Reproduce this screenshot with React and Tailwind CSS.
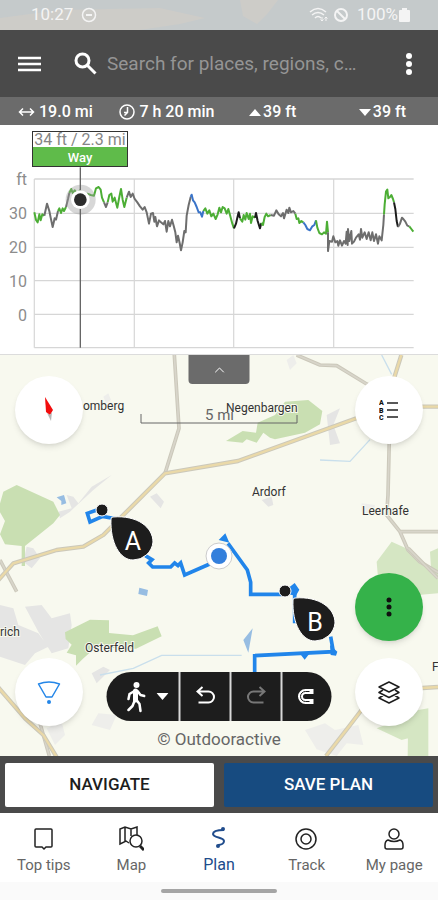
import { ChevronUp } from 'lucide-react';
import React, { useState } from 'react';

const GREEN = '#4cae35';
const GRAY = '#6e6e6e';
const BLUE = '#3a74c9';
const BLACK = '#1c1c1c';

const segments = [
    { color: GREEN, points: '103,262 108,285 113,292 118,268 122,286 127,268 133,272' },
    { color: GRAY, points: '133,272 141,236 148,258 152,278 158,306 164,280 168,284 174,258' },
    { color: GREEN, points: '174,258 178,250 183,264 188,250 192,258 198,246' },
    { color: GRAY, points: '198,246 204,222 208,204' },
    { color: GREEN, points: '208,204 214,192 218,204 224,196 232,206 240,196 250,214 262,206 272,210 282,212 288,190 296,186 302,194 306,218 312,232' },
    { color: GRAY, points: '312,232 318,246 323,232' },
    { color: GREEN, points: '323,232 328,210 334,206 338,230 344,218 352,248 358,216 363,192 368,224 373,246 380,218' },
    { color: GRAY, points: '380,218 387,200 392,216 398,206 404,222 412,232 420,244 428,254 434,246 440,262 447,296 453,266 459,264 463,290 466,276 471,304 477,286 483,292 490,298 495,288 500,320 505,288 510,304 516,284 521,302 526,322 530,352 534,332 539,354 543,376 548,352 553,318 557,322 560,272 566,240 572,216' },
    { color: BLUE, points: '572,216 575,209 579,226 584,232 590,246 596,262 601,262 606,275 610,258' },
    { color: GREEN, points: '610,258 616,250 622,266 628,256 634,274 640,266 647,282 653,268 658,248 663,262 668,246 674,250 680,266 685,252 691,274 697,296 702,310' },
    { color: BLACK, points: '702,310 708,296 712,278 716,262 720,280' },
    { color: GREEN, points: '720,280 727,290 731,270 736,284 740,264 746,282 750,266 753,294 758,274 765,278' },
    { color: BLACK, points: '765,278 768,264 773,288 780,310 784,294' },
    { color: GREEN, points: '784,294 789,300 794,276 799,266 804,274 812,270' },
    { color: GRAY, points: '812,270 822,272 829,256 836,268 843,274 849,264 852,280 860,254 865,264 868,248 873,262 880,258 886,266' },
    { color: GREEN, points: '886,266 890,282 895,280 898,294 904,288 910,292' },
    { color: BLUE, points: '910,292 916,300 922,312 930,316 937,304 943,300 948,286' },
    { color: GREEN, points: '948,286 952,308 958,324 966,328 972,322 978,326 981,290 984,322' },
    { color: GRAY, points: '984,322 984,378 988,348 996,350 1000,334 1006,352 1012,348 1015,362 1020,346 1026,362 1032,348 1037,356 1040,320 1043,360 1044,312 1048,348 1054,318 1056,356 1062,350 1068,338 1076,328 1080,344 1083,312 1087,338 1094,322 1100,342 1106,322 1112,346 1117,322 1122,348 1128,328 1134,356 1138,334 1145,346 1150,300 1152,268' },
    { color: GREEN, points: '1152,268 1154,238 1158,200 1162,194 1165,220 1170,216 1174,210 1179,222 1182,232' },
    { color: BLACK, points: '1182,232 1186,252 1190,288 1194,306' },
    { color: GRAY, points: '1194,306 1200,296 1206,278 1210,282 1216,290 1222,302 1228,304' },
    { color: GREEN, points: '1228,304 1234,312 1240,320' },
];

const axisLabels = [
    { text: 'ft', y: 60 },
    { text: '30', y: 94 },
    { text: '20', y: 128 },
    { text: '10', y: 162 },
    { text: '0', y: 196 },
];

const places = [
    { name: 'omberg', x: 83, y: 55 },
    { name: 'Negenbargen', x: 226, y: 57 },
    { name: 'Ardorf', x: 252, y: 141 },
    { name: 'Leerhafe', x: 362, y: 160 },
    { name: 'Osterfeld', x: 85, y: 297 },
    { name: 'rich', x: 0, y: 281 },
    { name: 'F', x: 432, y: 316 },
];

const StatusBar = () => (
    <div className="relative flex h-[30px] items-center justify-between overflow-hidden bg-[#c5cacb] pr-7 pl-[31px] text-[17px] text-[#f4f4f4]">
        <svg className="absolute inset-0 h-full w-full" viewBox="0 0 438 30" preserveAspectRatio="none" aria-hidden="true">
            <path d="M0 18 60 10l100-2 45 10-25 6-40 6H0zM240 0h38l-10 13-11 11-14-8z" fill="#cdccc8" />
        </svg>
        <div className="relative flex items-center gap-2">
            <span>10:27</span>
            <svg width="16" height="16" viewBox="0 0 16 16" fill="none" stroke="currentColor" strokeWidth="1.5">
                <circle cx="8" cy="8" r="6.5" />
                <path d="M5 8h6" strokeWidth="2" />
            </svg>
        </div>
        <div className="relative flex items-center gap-1">
            <svg width="20" height="16" viewBox="0 0 20 16" fill="none" stroke="currentColor" strokeWidth="1.5">
                <path d="M1 5q8-7 16 0M3 8q6-5 12 0M6 11q3-3 6 0" />
                <path d="m13 10 0 4m-1.500-1.500 1.500 1.500 1.500-1.500M17 14v-4m-1.500 1.500L17 10l1.500 1.500" strokeWidth="1" />
            </svg>
            <svg width="16" height="16" viewBox="0 0 16 16" fill="none" stroke="currentColor" strokeWidth="2">
                <circle cx="8" cy="8" r="6" />
                <path d="m4 4 8 8" />
            </svg>
            <div className="flex items-center gap-px">
                <span className="pl-1">100%</span>
                <svg width="11" height="16" viewBox="0 0 11 16" fill="currentColor">
                    <path d="M3 1h5v2h2q1 0 1 1v10q0 1-1 1H1q-1 0-1-1V4q0-1 1-1h2z" />
                </svg>
            </div>
        </div>
    </div>
);

const SearchBar = () => (
    <header className="flex h-[67px] items-center bg-[#4a4a4a] px-[18px] text-white">
        <button aria-label="Menu">
            <svg width="24" height="18" viewBox="0 0 24 18" stroke="currentColor" strokeWidth="2.500">
                <path d="M0 3h23M0 9h23M0 15h23" />
            </svg>
        </button>
        <label htmlFor="search" className="ml-8">
            <svg width="23" height="23" viewBox="0 0 23 23" fill="none" stroke="currentColor" strokeWidth="3">
                <circle cx="8.500" cy="8.500" r="6.500" />
                <path d="m13 13 8.500 8.500" />
            </svg>
        </label>
        <input
            id="search"
            type="text"
            aria-label="Search"
            placeholder="Search for places, regions, c…"
            className="ml-[10px] min-w-0 flex-1 bg-transparent pt-0.5 text-[19px] text-white outline-none placeholder:text-[#959595]"
        />
        <button aria-label="More options" className="ml-2">
            <svg width="22" height="22" viewBox="0 0 22 22" fill="currentColor">
                <circle cx="11" cy="3" r="3" />
                <circle cx="11" cy="11" r="3" />
                <circle cx="11" cy="19" r="3" />
            </svg>
        </button>
    </header>
);

const RouteStats = () => (
    <div className="flex h-7 items-center justify-between bg-[#6b6b6b] pt-0.5 pr-8 pl-[18px] text-base font-medium text-white">
        <div className="flex items-center gap-1">
            <svg width="17" height="10" viewBox="0 0 17 10" fill="none" stroke="currentColor" strokeWidth="1.500">
                <path d="M1 5h14M5 1.500 1.500 5 5 8.500M12 1.500 15.500 5 12 8.500" />
            </svg>
            <span>19.0 mi</span>
        </div>
        <div className="flex items-center gap-1">
            <svg width="16" height="16" viewBox="0 0 16 16" fill="none" stroke="currentColor" strokeWidth="1.500">
                <circle cx="8" cy="8" r="7" />
                <path d="M8.500 3v5.500l-3 3M8.500 8.500H5" />
            </svg>
            <span>7 h 20 min</span>
        </div>
        <div className="flex items-center gap-0.5 pl-2">
            <svg width="12" height="7" viewBox="0 0 12 7" fill="currentColor">
                <path d="M6 0 12 7H0z" />
            </svg>
            <span>39 ft</span>
        </div>
        <div className="flex items-center gap-0.5 pl-9">
            <svg width="12" height="7" viewBox="0 0 12 7" fill="currentColor">
                <path d="M0 0h12L6 7z" />
            </svg>
            <span>39 ft</span>
        </div>
    </div>
);

const ElevationProfile = () => (
    <section className="border-b border-[#dcdcdc] bg-white" aria-label="Elevation profile">
        <svg className="block w-full" viewBox="0 0 438 229">
            <g transform="scale(0.33333)" fill="none">
                <path d="M103 162v506M403 162v506M701 162v506M1001 162v506" stroke="#dadada" strokeWidth="4" />
                <path d="M103 162h1138M103 265h1138M103 367h1138M103 467h1138M103 568h1138M103 668h1138" stroke="#d6d6d6" strokeWidth="4" />
                {segments.map((segment) => (
                    <polyline
                        key={segment.points}
                        points={segment.points}
                        stroke={segment.color}
                        strokeWidth="6"
                        strokeLinejoin="round"
                    />
                ))}
                <circle cx="242" cy="224" r="45" fill="#9a9a9a" fillOpacity="0.4" />
                <path d="M241 127v541" stroke="#666" strokeWidth="4" />
                <circle cx="241" cy="224" r="28" fill="#fff" />
                <circle cx="241" cy="224" r="19" fill="#2b2b2b" />
            </g>
            <g fill="#8c8c8c" fontSize="16" textAnchor="end">
                {axisLabels.map((label) => (
                    <text key={label.text} x="27" y={label.y}>{label.text}</text>
                ))}
            </g>
            <rect x="32" y="6" width="96" height="36" fill="#333" />
            <rect x="33" y="7" width="94" height="15" fill="#fff" />
            <rect x="33" y="22" width="94" height="19" fill="#5fbb4a" />
            <text x="80" y="20" fontSize="16" fill="#858585" textAnchor="middle">34 ft / 2.3 mi</text>
            <text x="80" y="37" fontSize="13" fontWeight="500" fill="#fff" textAnchor="middle">Way</text>
        </svg>
    </section>
);

const Road = ({ d, main }) => (
    <g fill="none" strokeLinejoin="round">
        <path d={d} stroke="#cbc8ba" strokeWidth={main ? 13 : 11} />
        <path d={d} stroke={main ? '#ead9a8' : '#d8d5ca'} strokeWidth={main ? 7 : 5} />
    </g>
);

const MapCanvas = () => (
    <svg className="absolute inset-0 h-full w-full" viewBox="0 0 438 401" preserveAspectRatio="xMidYMid slice" role="img" aria-label="Route map">
        <rect width="438" height="401" fill="#f8f9ef" />
        <g transform="scale(0.33333)">
            {/* Settlements */}
            <g fill="#e5e5e4">
                <path d="m175 470 40-10-15-40 20 5 15 20 40-50 60-35-55 45-70 65-30 20zM450 425l20-10 22 25-10 20zM80 575l20 5 20 30-25 30-25-20zM0 750l40 10 15 50 60 25 30 40-40 20-30 35-90-30zM75 755l50-5 30 40 55-15 5 35-10 70-50 15-40-65zM275 955l35-20 20 10-40 40zM980 180l40-20-20 50 20 55-30 5zM785 435l30-10 5 25-15 5z" />
                <path d="m275 1110 20-35 55 5-20 45zM860 15l20-15 10 25-20 20zM915 1125l60-20 30 20 70-15 15 60-50-5-30 38-60-20zM310 125l15-10 8 20-15 10zM140 1120l45-20 10 40-30 30zM1085 445l40 5-5 30-35-10z" fill="#eeeeeb" />
            </g>
            {/* Woods */}
            <g fill="#c9dfb2">
                <path d="m10 410 40-20 110 50 20 40-20 25-85 68v60h-10v-60l-50-5-15-30 15-40-20-35z" />
                <path d="m195 832 75-38 57 2v38l72 7 74-27 12 30-77 37-120-4-40 35-20 20v-31l-28-8 15-24-18-17z" />
                <path d="m825 180 30-40 70-5 42 33-7 40-45 25-90 20-15-5-20-15-20 30-30-10-12 10-50-5 50-30 40 5 5-30z" />
            </g>
            <g fill="#d5e6c3">
                <path d="m1130 620 45-60 55 25 84 80v50l-60 5-60-40-60-12zM1290 590l24-10v90l-20-15zM1225 1070l60-10v143h-62zM1130 1120l90-35 20 60-35 10z" />
            </g>
            {/* Water */}
            <path d="m170 427 22-7 7 25-15 5v-12zM418 698l26 7-3 18-26-6zM758 820l-28 35 15 38z" fill="#97bde2" />
            <path d="M300 960l100-20 85-39h240M960 315l90 4 60-65M1145 0l30 58" fill="none" stroke="#c9dfec" strokeWidth="4" />

            <Road d="M523 0l14 220-42 135" />
            <Road d="M890 0l70 30 50 2 90 55 60 30" />
            <Road d="M1168 250l-4 170-4 60 40 50 24 55 35 35 60 35M1200 530h114" />
            <Road d="M1225 580l89 90M0 615l50 95M120 1105l28 98" />
            <Road main d="M1204 0l-25 80-10 70 70 5h75M1169 150l-100 40-355 128-219 37-135 135-50 50-60 35-80 10-130 40-85 95-5 45-40 65 10 50 60 100 95 110 55 50 50 83" />
            <Road main d="M978 1203l70-90 80-105 186-12" />

            {/* Planned route */}
            <g fill="none" stroke="#2185ea" strokeWidth="11">
                <path d="M350 492l-42-8-38 17-8-26 40-14" />
                <path d="m436 602 20 12-10 10 12 12h54l12-12 10 8 8-8 12 36 75-33 25-13" />
                <path d="m684 565 58 80 10 37v36h105M884 710v95M992 845l8 45-236 12v50" />
            </g>
            <path d="M656 555l20-20 12 28zM864 700l20-16 14 20-10 18-24-4zM990 870l22 20-4 12-16-2zM900 896l14 18 14-18z" fill="#2185ea" />
        </g>

        {/* Place names */}
        <g fontSize="12" fill="#333" stroke="#f8f9ef" strokeWidth="2" paintOrder="stroke">
            {places.map((place) => (
                <text key={place.name} x={place.x} y={place.y}>{place.name}</text>
            ))}
        </g>

        {/* Scale */}
        <path d="M141 59v9h156v-8" fill="none" stroke="#666" />
        <text x="205" y="65" fontSize="15" fill="#666">5 mi</text>

        {/* Waypoints */}
        <g fill="#1d1d1d" stroke="#fff" strokeWidth="1">
            <circle cx="102" cy="155" r="6" />
            <circle cx="285" cy="236" r="6" />
            <path d="M111 164q0-2 2-2c24-2 40 10 40 25a20 20 0 0 1-20 18c-13 0-23-17-22-41z" />
            <path d="M293 245q0-2 2-2c24-2 40 10 40 25a20 20 0 0 1-20 18c-13 0-23-17-22-41z" />
        </g>
        <g fill="#fff" fontSize="25" textAnchor="middle">
            <text x="133" y="195">A</text>
            <text x="315" y="276">B</text>
        </g>
        <circle cx="219" cy="201" r="13" fill="#fff" stroke="#ccc" />
        <circle cx="219" cy="201" r="8" fill="#337fdc" />
    </svg>
);

const roundButton = 'flex size-[68px] items-center justify-center rounded-full shadow-md';

const PlanMap = () => {
    const [collapsed, setCollapsed] = useState(false);

    return (
        <main className="relative min-h-[401px] flex-1 overflow-hidden">
            <MapCanvas />
            <button
                onClick={() => setCollapsed(!collapsed)}
                className="absolute top-0 left-1/2 flex h-[29px] w-[61px] -translate-x-1/2 items-center justify-center rounded-b-sm bg-[#6b6b6b] text-white"
                aria-label="Toggle elevation profile"
                aria-expanded={!collapsed}
            >
                <ChevronUp size={16} strokeWidth={1.5} />
            </button>

            {/* Left controls */}
            <button className={`${roundButton} absolute top-[21px] left-[15px] bg-white`} aria-label="Compass">
                <svg width="12" height="26" viewBox="0 0 12 26">
                    <path d="m2 0 8 13-3 5-4-3z" fill="#f20d0d" />
                    <path d="m4 16 3 2 2-3-1 9z" fill="#b5b5b5" />
                </svg>
            </button>
            <button className={`${roundButton} absolute bottom-[30px] left-[15px] bg-white`} aria-label="Locate me">
                <svg width="24" height="26" viewBox="0 0 24 26" fill="none" stroke="#2486e8" strokeWidth="1.500">
                    <path d="M1.500 5Q12 1 22.500 5L15 18H9z" strokeLinejoin="round" />
                    <circle cx="12" cy="23" r="2" fill="#2486e8" stroke="none" />
                </svg>
            </button>

            {/* Right controls */}
            <button className={`${roundButton} absolute top-[21px] right-[15px] bg-white`} aria-label="Legend">
                <svg width="20" height="22" viewBox="0 0 20 22">
                    <path d="M8 4h11M8 11h11M8 18h11" stroke="#222" strokeWidth="1.500" />
                    <g fontSize="7" fontWeight="900" fill="#111">
                        <text x="0" y="6">A</text>
                        <text x="0" y="14">B</text>
                        <text x="0" y="21">C</text>
                    </g>
                </svg>
            </button>
            <button className={`${roundButton} absolute right-[15px] bottom-[115px] bg-[#35b24a]`} aria-label="Plan actions">
                <svg width="6" height="20" viewBox="0 0 6 20" fill="#111">
                    <circle cx="3" cy="3" r="2.500" />
                    <circle cx="3" cy="10" r="2.500" />
                    <circle cx="3" cy="17" r="2.500" />
                </svg>
            </button>
            <button className={`${roundButton} absolute right-[15px] bottom-[30px] bg-white text-[#1d1d1d]`} aria-label="Map layers">
                <svg width="22" height="23" viewBox="0 0 22 23" fill="none" stroke="currentColor" strokeWidth="1.500" strokeLinejoin="round">
                    <path d="m11 1 10 5-10 5L1 6z" />
                    <path d="m5 9-4 2.500 10 5 10-5L17 9M5 14.500 1 17l10 5 10-5-4-2.500" />
                </svg>
            </button>

            {/* Planning toolbar */}
            <div className="absolute bottom-[7px] left-1/2 flex -translate-x-1/2 flex-col items-center">
                <div className="flex h-[49px] divide-x-2 divide-[#d8d8d8] overflow-hidden rounded-full bg-[#1d1d1d] text-white">
                    <button className="flex w-[74px] items-center justify-end gap-[11px] pr-[10px]" aria-label="Activity: hiking">
                        <svg width="19" height="32" viewBox="0 0 19 32" fill="none" stroke="currentColor" strokeLinecap="round" strokeLinejoin="round">
                            <circle cx="10" cy="4" r="3" fill="currentColor" stroke="none" />
                            <path d="M9 10v9" strokeWidth="5" />
                            <path d="m8 10-5 3-1 5M11 10l3 4 4 1M8 20l-2 5-4 4M10 19l3 4 1 7" strokeWidth="2.500" />
                        </svg>
                        <svg width="12" height="7" viewBox="0 0 12 7" fill="currentColor">
                            <path d="M0 0h12L6 7z" />
                        </svg>
                    </button>
                    <button className="flex w-[51px] items-center justify-center" aria-label="Undo">
                        <svg width="20" height="21" viewBox="0 0 20 21" fill="none" stroke="currentColor" strokeWidth="2">
                            <path d="M7 1 2 5.500 7 10M2 5.500h11a5.500 5.500 0 0 1 0 11H3" />
                        </svg>
                    </button>
                    <button className="flex w-[51px] items-center justify-center text-[#777]" aria-label="Redo" disabled>
                        <svg width="20" height="21" viewBox="0 0 20 21" fill="none" stroke="currentColor" strokeWidth="2">
                            <path d="m13 1 5 4.500-5 4.500M18 5.500H7a5.500 5.500 0 0 0 0 11h10" />
                        </svg>
                    </button>
                    <button className="flex w-[49px] items-center justify-center pr-1" aria-label="Snap to path">
                        <svg width="18" height="17" viewBox="0 0 18 17" fill="none" stroke="currentColor">
                            <path d="M17 3.500H9a5 5 0 0 0 0 10h8" strokeWidth="5" />
                            <path d="M13 3.500H9a5 5 0 0 0 0 10h4" stroke="#1d1d1d" strokeWidth="1" />
                        </svg>
                    </button>
                </div>
                <p className="mt-2 text-[17px] leading-5 text-[#666]">© Outdooractive</p>
            </div>
        </main>
    );
};

const navItems = [
    {
        label: 'Top tips',
        icon: <path d="M5 3h15q1 0 1 1v16q0 1-1 1h-5l-2 2-2-2H5q-1 0-1-1V4q0-1 1-1z" />,
    },
    {
        label: 'Map',
        icon: (
            <>
                <path d="M10 17 7 15l-6 3V3l5-2 6 2 6-2v8M6 1v14M12 3v7" />
                <circle cx="17" cy="15" r="6" />
                <path d="m21 20 4 4" strokeWidth="3" />
            </>
        ),
    },
    {
        label: 'Plan',
        icon: (
            <>
                <path d="M18 4C10 4 7 6 7 8c0 4 11 3 11 7 0 2-2 4-6 4" strokeWidth="2" />
                <circle cx="17" cy="3" r="2" fill="currentColor" stroke="none" />
                <circle cx="12" cy="20" r="2" fill="currentColor" stroke="none" />
            </>
        ),
    },
    {
        label: 'Track',
        icon: (
            <>
                <circle cx="12" cy="13" r="10" />
                <circle cx="12" cy="13" r="5" />
            </>
        ),
    },
    {
        label: 'My page',
        icon: (
            <>
                <circle cx="12" cy="8" r="5" />
                <path d="M6 14q-3 1-3 5v2q0 2 2 2h14q2 0 2-2v-2q0-4-3-5-6 3-12 0z" />
            </>
        ),
    },
];

const BottomNav = () => (
    <nav className="grid h-[69px] grid-cols-5 bg-white text-[15px] text-[#666]">
        {navItems.map((item) => {
            const isActive = item.label === 'Plan';
            return (
                <a
                    key={item.label}
                    href="#"
                    className={`flex flex-col items-center gap-1 pt-[13px] ${isActive ? 'text-base text-[#204c8c]' : ''}`}
                    aria-current={isActive ? 'page' : undefined}
                >
                    <svg
                        className={isActive ? '' : 'text-[#222]'}
                        width="25"
                        height="25"
                        viewBox="0 0 25 25"
                        fill="none"
                        stroke="currentColor"
                        strokeWidth="1.500"
                    >
                        {item.icon}
                    </svg>
                    <span className="leading-5">{item.label}</span>
                </a>
            );
        })}
    </nav>
);

const App = () => (
    <div className="flex min-h-screen flex-col bg-white font-[Roboto,sans-serif]">
        <StatusBar />
        <SearchBar />
        <RouteStats />
        <ElevationProfile />
        <PlanMap />
        <div className="grid grid-cols-2 gap-[10px] bg-[#4a4a4a] px-[5px] pt-[7px] pb-[6px] text-[17px] font-medium">
            <button className="h-11 rounded-xs bg-white text-[#1d1d1d]">NAVIGATE</button>
            <button className="h-11 rounded-xs bg-[#174b80] text-white">SAVE PLAN</button>
        </div>
        <BottomNav />
        <div className="flex h-[18px] items-center justify-center bg-[#fafafa]">
            <div className="h-1 w-[116px] rounded-full bg-[#a5a5a5]" />
        </div>
    </div>
);

export default App;
